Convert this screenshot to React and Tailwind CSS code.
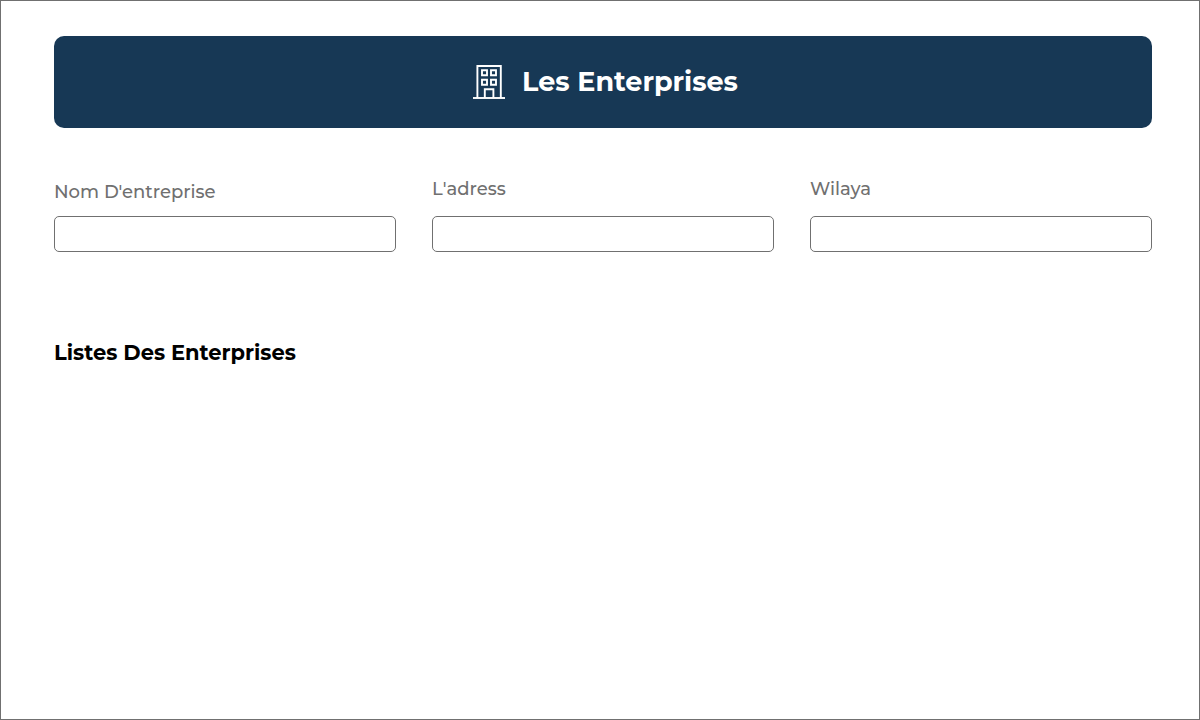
import React from 'react';

function BuildingIcon() {
  return (
    <svg width="32" height="34" viewBox="0 0 32 34" fill="none" stroke="currentColor" strokeWidth="1.9" aria-hidden="true" className="shrink-0">
      <path d="M4.4 33V1H27.8V33" />
      <path d="M0 33H32" />
      <path d="M9 5.3h5v5H9zM18 5.3h5v5h-5zM9 14.7h5v5H9zM18 14.7h5v5h-5z" />
      <path d="M11.8 33V24.3H20.4V33" />
    </svg>
  );
}

const fields = [
  { id: 'nom', label: "Nom D'entreprise", gap: 'gap-[10px]' },
  { id: 'adress', label: "L'adress", gap: 'gap-[13px]' },
  { id: 'wilaya', label: 'Wilaya', gap: 'gap-[13px]' },
];

export default function App() {
  return (
    <main className="min-h-screen border border-[#707070] bg-white pt-[35px] pr-[47px] pb-8 pl-[53px] font-['Montserrat','Inter',sans-serif]">
      <header className="flex items-center justify-center gap-[17px] rounded-[10px] bg-[#173855] py-7 pl-[5px] text-white">
        <BuildingIcon />
        <h1 className="text-[27px] leading-9 font-bold">Les Enterprises</h1>
      </header>

      <form className="mt-[47px] grid grid-cols-3 items-end gap-9">
        {fields.map(({ id, label, gap }) => (
          <div key={id} className={`flex flex-col ${gap}`}>
            <label htmlFor={id} className="text-[18px] leading-7 font-medium text-[#707070]">
              {label}
            </label>
            <input id={id} type="text" className="h-9 w-full rounded-[5px] border border-[#707070] bg-white px-3 outline-none" />
          </div>
        ))}
      </form>

      <h2 className="mt-[85px] text-[21px] leading-8 font-bold text-black">Listes Des Enterprises</h2>
    </main>
  );
}
